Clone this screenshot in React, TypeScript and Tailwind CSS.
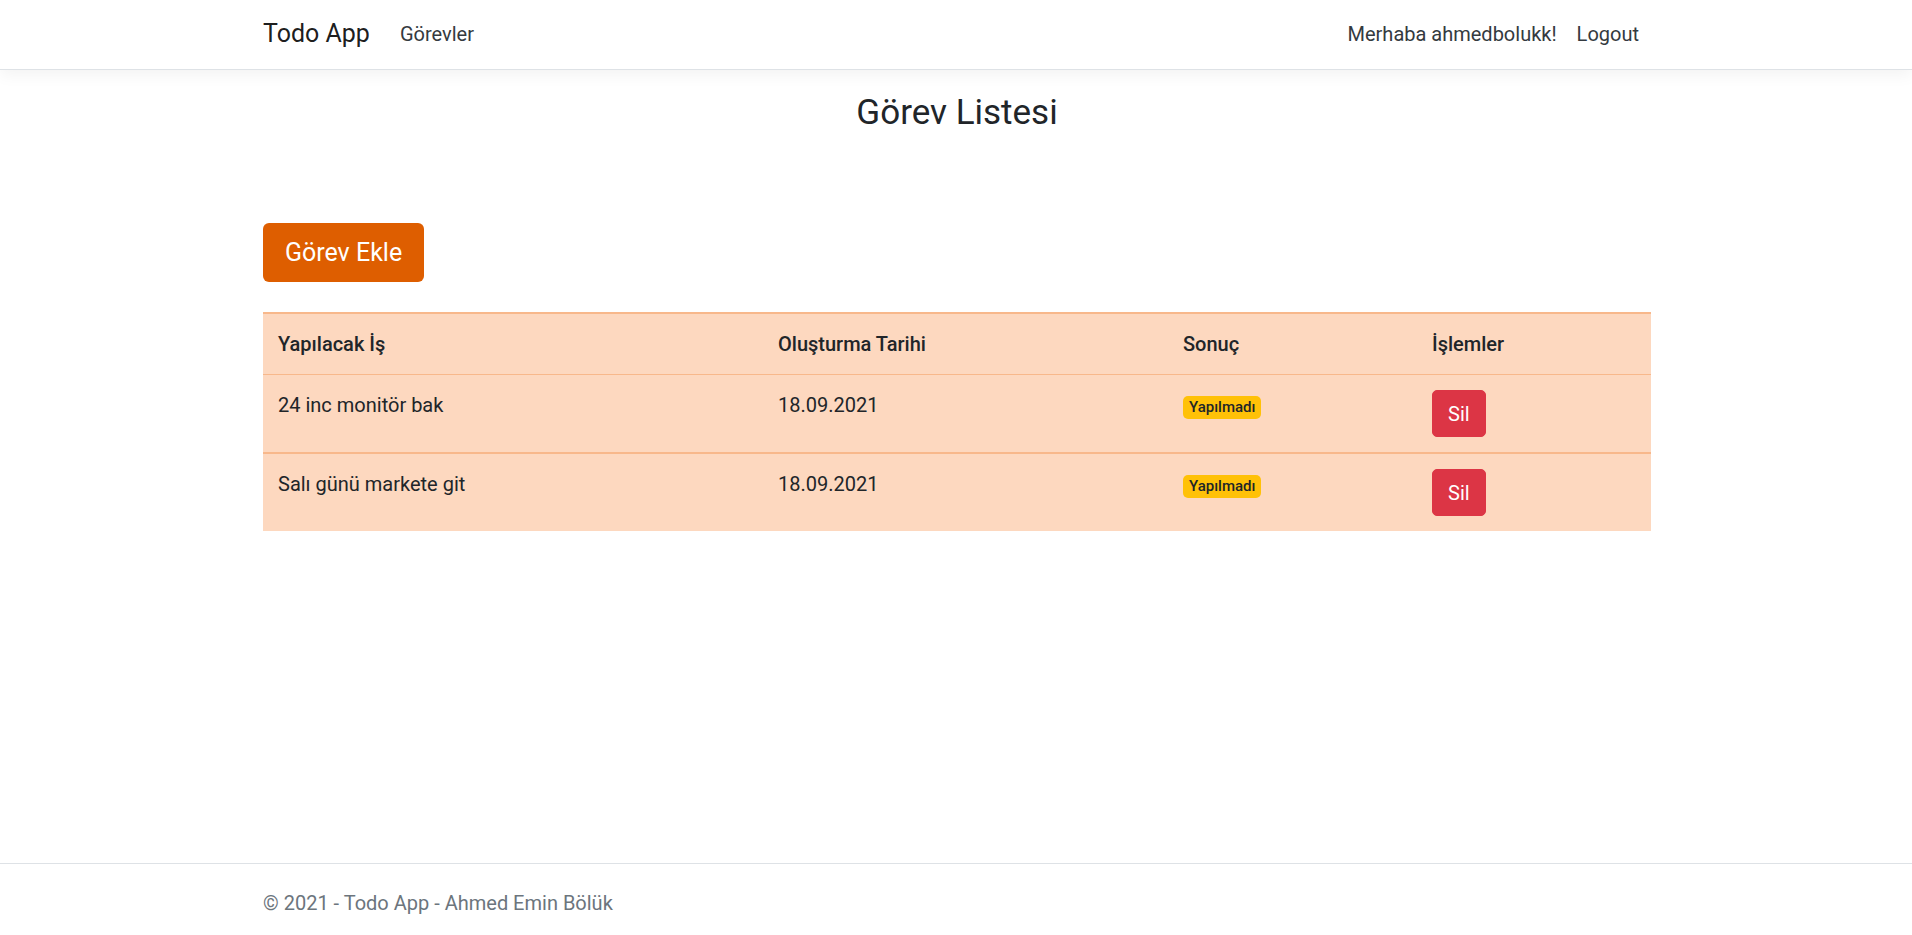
import type { JSX } from 'react'

type Task = {
  id: number
  title: string
  date: string
  done: boolean
}

const tasks: Task[] = [
  { id: 1, title: '24 inc monitör bak', date: '18.09.2021', done: false },
  { id: 2, title: 'Salı günü markete git', date: '18.09.2021', done: false },
]

export default function App(): JSX.Element {
  return (
    <div className="min-h-screen flex flex-col bg-white font-['Roboto','Liberation_Sans',sans-serif] text-[20px] text-[#212529]">
      {/* Navbar */}
      <header className="h-[70px] bg-white border-b border-[#dee2e6] shadow-[0_5px_15px_rgba(0,0,0,0.05)]">
        <nav className="max-w-[1390px] pl-[2px] pr-[2px] mx-auto h-full flex items-center">
          <a className="text-[25px] leading-[37.5px] text-[rgba(0,0,0,0.9)] mr-5 -mt-[2px]">Todo App</a>
          <a className="px-[10px] leading-[30px] text-[#343a40] -mt-[2px]">Görevler</a>
          <div className="ml-auto flex items-center -mt-[2px]">
            <span className="px-[10px] leading-[30px] text-[#343a40]">Merhaba ahmedbolukk!</span>
            <a className="px-[10px] leading-[30px] text-[#343a40]">Logout</a>
          </div>
        </nav>
      </header>

      {/* Content */}
      <main className="w-full max-w-[1390px] pl-[2px] mx-auto pt-[22px] pb-5">
        <h3 className="text-center text-[35px] font-normal leading-[1.2] mb-[89px]">Görev Listesi</h3>

        <button className="h-[59px] px-[22px] rounded-[6px] bg-[#de5e00] text-white text-[25px] leading-[37.5px]">
          Görev Ekle
        </button>

        <table className="w-full mt-[30px] border-collapse bg-[#fdd8bf] border-t-2 border-[#f8b88b]">
          <thead>
            <tr>
              <th className="w-[500px] px-[15px] py-[15px] text-left font-medium leading-[30px] border-b border-[#f8b88b]">Yapılacak İş</th>
              <th className="w-[405px] px-[15px] py-[15px] text-left font-medium leading-[30px] border-b border-[#f8b88b]">Oluşturma Tarihi</th>
              <th className="w-[249px] px-[15px] py-[15px] text-left font-medium leading-[30px] border-b border-[#f8b88b]">Sonuç</th>
              <th className="px-[15px] py-[15px] text-left font-medium leading-[30px] border-b border-[#f8b88b]">İşlemler</th>
            </tr>
          </thead>
          <tbody>
            {tasks.map((task, i) => (
              <tr key={task.id} className={i > 0 ? 'border-t-2 border-[#f8b88b]' : ''}>
                <td className="p-[15px] align-top leading-[30px]">{task.title}</td>
                <td className="p-[15px] align-top leading-[30px]">{task.date}</td>
                <td className="p-[15px] align-top leading-[30px]">
                  <span className="inline-block align-baseline bg-[#ffc107] text-[#212529] text-[15px] font-medium leading-none px-[6px] py-[3.75px] rounded-[5px]">
                    {task.done ? 'Yapıldı' : 'Yapılmadı'}
                  </span>
                </td>
                <td className="p-[15px] align-top">
                  <button className="bg-[#dc3545] text-white leading-[30px] px-[15px] py-[7.5px] rounded-[5px] border border-[#dc3545]">
                    Sil
                  </button>
                </td>
              </tr>
            ))}
          </tbody>
        </table>
      </main>

      {/* Footer */}
      <footer className="mt-auto h-[72px] border-t border-[#dee2e6] text-[#6c757d] whitespace-nowrap">
        <div className="max-w-[1390px] pl-[2px] mx-auto leading-[78px]">© 2021 - Todo App - Ahmed Emin Bölük</div>
      </footer>
    </div>
  )
}
